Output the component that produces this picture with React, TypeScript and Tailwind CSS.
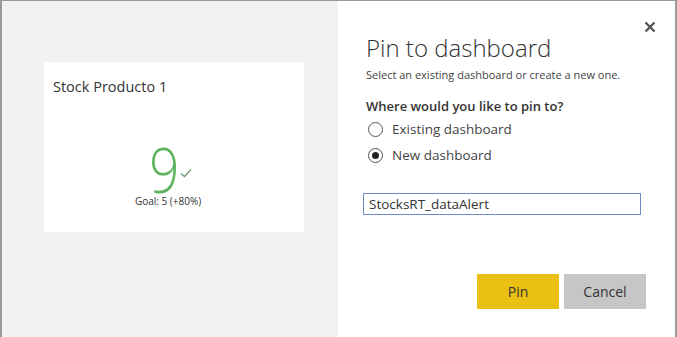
import { useState } from 'react';

const font = { fontFamily: '"Segoe UI", "Open Sans", "Noto Sans", sans-serif' };

function Radio({ checked, label, onSelect }: { checked: boolean; label: string; onSelect: () => void }) {
	return (
		<button className="flex items-center h-[26px] text-left" onClick={onSelect}>
			<span className="w-[15px] h-[15px] rounded-full border border-[#555] bg-white flex items-center justify-center">
				{checked && <span className="w-[7px] h-[7px] rounded-full bg-[#222]" />}
			</span>
			<span className="ml-[9px] text-[13.5px] text-[#444]">{label}</span>
		</button>
	);
}

export default function App() {
	const [target, setTarget] = useState<'existing' | 'new'>('new');
	const [name, setName] = useState('StocksRT_dataAlert');

	return (
		<div
			className="w-[677px] h-[337px] flex bg-white border-l-2 border-r-2 border-t border-[#9a9a9a] overflow-hidden"
			style={font}
		>
			<div className="w-[336px] h-full bg-[#f2f2f2] pl-[42px] pt-[61px]">
				<div className="w-[260px] h-[170px] bg-white flex flex-col">
					<div className="pl-[9px] pt-[15px] text-[14.5px] text-[#333] leading-[20px]">Stock Producto 1</div>
					<div className="flex flex-col items-center mt-[48px] pr-[12px]">
						<div className="flex items-end h-[49px]">
							<span className="inline-block scale-x-[0.85] origin-right text-[62px] leading-[49px] font-light text-[#5cb45c]">
								9
							</span>
							<svg width="12" height="10" viewBox="0 0 12 10" className="mb-[16px] ml-[1px]">
								<path d="M1 5.5 L4.5 8.5 L11 1.5" fill="none" stroke="#6d9a6d" strokeWidth="1.3" />
							</svg>
						</div>
						<div className="text-[10px] leading-[14px] text-[#333] mt-[0px]">Goal: 5 (+80%)</div>
					</div>
				</div>
			</div>
			<div className="flex-1 h-full flex flex-col relative pl-[28px] pr-[31px]">
				<button className="absolute right-[19px] top-[20px] text-[#555]" aria-label="Close">
					<svg width="12" height="12" viewBox="0 0 12 12">
						<path d="M1.5 1.5 L10.5 10.5 M10.5 1.5 L1.5 10.5" stroke="#555" strokeWidth="2.4" />
					</svg>
				</button>
				<div className="mt-[31px] text-[24px] leading-[32px] font-light text-[#333]">Pin to dashboard</div>
				<div className="mt-[3px] text-[11px] text-[#444]">Select an existing dashboard or create a new one.</div>
				<div className="mt-[13px] text-[13px] font-semibold text-[#333]">Where would you like to pin to?</div>
				<div className="flex flex-col ml-[2px]">
					<Radio checked={target === 'existing'} label="Existing dashboard" onSelect={() => setTarget('existing')} />
					<Radio checked={target === 'new'} label="New dashboard" onSelect={() => setTarget('new')} />
				</div>
				<input
					className="mt-[25px] -ml-[3px] w-[278px] h-[22px] border border-[#6b8cc7] px-[5px] text-[13.5px] text-[#333] outline-none"
					value={name}
					onChange={(e) => setName(e.target.value)}
				/>
				<div className="flex justify-end gap-[5px] mt-[59px] -mr-[2px]">
					<button className="w-[82px] h-[35px] bg-[#eac112] text-[14px] text-[#333]">Pin</button>
					<button className="w-[82px] h-[35px] bg-[#c6c6c6] text-[14px] text-[#333]">Cancel</button>
				</div>
			</div>
		</div>
	);
}
